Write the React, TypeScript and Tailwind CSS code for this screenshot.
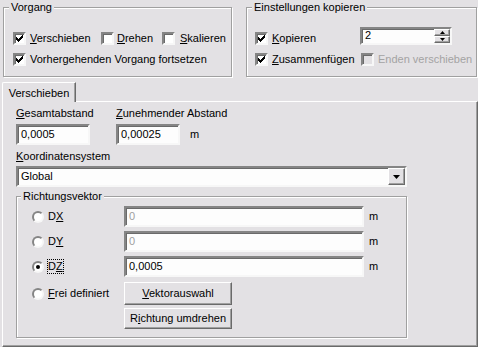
import React from "react";

const sunken =
  "border-2 border-t-[#858585] border-l-[#858585] border-r-[#f7f7f7] border-b-[#f7f7f7] shadow-[inset_1px_1px_0_#6a6a6a]";
const raised =
  "border border-t-white border-l-white border-r-[#6a6a6a] border-b-[#6a6a6a] shadow-[inset_-1px_-1px_0_#a0a0a0]";
const etched =
  "border border-[#a0a0a0] shadow-[inset_1px_1px_0_white,1px_1px_0_white]";

function Check({ checked, disabled }: { checked?: boolean; disabled?: boolean }) {
  return (
    <span
      className={`w-[13px] h-[13px] shrink-0 flex items-center justify-center ${sunken} ${
        disabled ? "bg-[#e3e1e4]" : "bg-white"
      }`}
    >
      {checked && (
        <svg width="7" height="7" viewBox="0 0 7 7" shapeRendering="crispEdges">
          <path d="M6 0h1v3h-1v1h-1v1h-1v1h-1v1h-1v-1h-1v-1h-1v-3h1v1h1v1h1v-1h1v-1h1z" fill="#000" />
        </svg>
      )}
    </span>
  );
}

function Radio({ on }: { on?: boolean }) {
  return (
    <span className="w-[12px] h-[12px] shrink-0 rounded-full border-2 border-t-[#858585] border-l-[#858585] border-r-[#f7f7f7] border-b-[#f7f7f7] bg-white flex items-center justify-center">
      {on && <span className="w-[4px] h-[4px] rounded-full bg-black" />}
    </span>
  );
}

function Legend({ children, ml = "ml-[5px]" }: { children: React.ReactNode; ml?: string }) {
  return <legend className={`${ml} px-[2px] leading-[13px] bg-[#e3e1e4] relative z-10`}>{children}</legend>;
}

function Field({ value, w, grey }: { value: string; w: string; grey?: boolean }) {
  return (
    <div className={`${w} h-[21px] ${sunken} bg-[#fdfdfd] flex items-center pl-[3px] ${grey ? "text-[#a0a0a0]" : ""}`}>
      {value}
    </div>
  );
}

export default function App() {
  return (
    <div className="w-[478px] h-[347px] bg-[#e3e1e4] overflow-hidden font-['Liberation_Sans',Arial,sans-serif] text-[11px] leading-[13px] text-black pt-[1px]">
      {/* top groups */}
      <div className="flex pl-[3px]">
        <fieldset className={`w-[229px] h-[76px] ${etched}`}>
          <Legend>Vorgang</Legend>
          <div className="pl-[9px] pt-[18px]">
            <div className="flex items-center">
              <Check checked />
              <span className="ml-[4px] w-[71px]"><u>V</u>erschieben</span>
              <Check />
              <span className="ml-[3px] w-[45px]"><u>D</u>rehen</span>
              <Check />
              <span className="ml-[5px]"><u>S</u>kalieren</span>
            </div>
            <div className="flex items-center mt-[8px]">
              <Check checked />
              <span className="ml-[4px]">Vorhergehenden Vorgang fortsetzen</span>
            </div>
          </div>
        </fieldset>

        <fieldset className={`ml-[14px] w-[231px] h-[76px] ${etched}`}>
          <Legend>Einstellungen kopieren</Legend>
          <div className="pl-[8px] pt-[13px]">
            <div className="flex items-end">
              <div className="w-[105px] flex items-center">
                <Check checked />
                <span className="ml-[4px]"><u>K</u>opieren</span>
              </div>
              <div className={`w-[92px] h-[18px] ${sunken} bg-[#fdfdfd] flex items-stretch`}>
                <span className="flex-1 pl-[3px] leading-[13px]">2</span>
                <div className="w-[16px] flex flex-col">
                  <div className={`flex-1 bg-[#e3e1e4] ${raised} flex items-center justify-center`}>
                    <svg width="5" height="3" viewBox="0 0 5 3"><path d="M2.5 0L5 3H0z" fill="#000" /></svg>
                  </div>
                  <div className={`flex-1 bg-[#e3e1e4] ${raised} flex items-center justify-center`}>
                    <svg width="5" height="3" viewBox="0 0 5 3"><path d="M0 0h5L2.5 3z" fill="#000" /></svg>
                  </div>
                </div>
              </div>
            </div>
            <div className="flex items-center mt-[8px]">
              <div className="w-[106px] flex items-center">
                <Check checked />
                <span className="ml-[4px]"><u>Z</u>usammenfügen</span>
              </div>
              <Check disabled />
              <span className="ml-[4px] text-[#a3a3a3]">Enden verschieben</span>
            </div>
          </div>
        </fieldset>
      </div>

      {/* tab */}
      <div className="mt-[5px] ml-[2px] relative z-10 -mb-[1px] w-[74px] h-[20px] bg-[#e3e1e4] border-l border-t border-white border-r border-r-[#6a6a6a] shadow-[inset_-1px_0_0_#a0a0a0] rounded-tl-[2px] flex justify-center pt-[4px]">
        Verschieben
      </div>

      {/* panel */}
      <div className="ml-[2px] w-[476px] h-[246px] border-l border-t border-white border-r border-b border-r-[#6a6a6a] border-b-[#6a6a6a] shadow-[inset_-1px_-1px_0_#a0a0a0] pl-[13px] pt-[5px]">
        <div className="flex">
          <div className="flex flex-col w-[100px]">
            <span className="mb-[4px]"><u>G</u>esamtabstand</span>
            <Field value="0,0005" w="w-[74px]" />
          </div>
          <div className="flex flex-col">
            <span className="mb-[4px]"><u>Z</u>unehmender Abstand</span>
            <div className="flex items-center">
              <Field value="0,00025" w="w-[64px]" />
              <span className="ml-[10px]">m</span>
            </div>
          </div>
        </div>

        <div className="mt-[5px] mb-[3px]"><u>K</u>oordinatensystem</div>
        <div className={`w-[391px] h-[21px] ${sunken} bg-[#fdfdfd] flex items-center justify-between pl-[3px]`}>
          <span>Global</span>
          <div className={`w-[17px] h-[17px] bg-[#e3e1e4] ${raised} flex items-center justify-center`}>
            <svg width="7" height="4" viewBox="0 0 7 4"><path d="M0 0h7L3.5 4z" fill="#000" /></svg>
          </div>
        </div>

        <fieldset className={`mt-[3px] w-[391px] h-[148px] ${etched}`}>
          <Legend ml="ml-[4px]">Richtungsvektor</Legend>
          <div className="flex flex-col gap-[4px] pl-[15px] pt-[3px]">
            {[
              ["D", "X", "0", true],
              ["D", "Y", "0", true],
              ["D", "Z", "0,0005", false],
            ].map(([a, b, v, grey], i) => (
              <div key={i} className="flex items-center">
                <div className="w-[92px] flex items-center">
                  <Radio on={i === 2} />
                  <span className={`ml-[4px] ${i === 2 ? "outline outline-1 outline-dotted outline-black" : ""}`}>
                    {a}<u>{b}</u>
                  </span>
                </div>
                <Field value={v as string} w="w-[240px]" grey={grey as boolean} />
                <span className="ml-[5px]">m</span>
              </div>
            ))}
            <div className="flex items-center mt-[1px]">
              <div className="w-[92px] flex items-center">
                <Radio />
                <span className="ml-[4px]"><u>F</u>rei definiert</span>
              </div>
              <div className={`w-[108px] h-[23px] ${raised} flex items-center justify-center`}>
                <span><u>V</u>ektorauswahl</span>
              </div>
            </div>
            <div className="flex ml-[92px] -mt-[1px]">
              <div className={`w-[108px] h-[21px] ${raised} flex items-center justify-center`}>
                <span>R<u>i</u>chtung umdrehen</span>
              </div>
            </div>
          </div>
        </fieldset>
      </div>
    </div>
  );
}
